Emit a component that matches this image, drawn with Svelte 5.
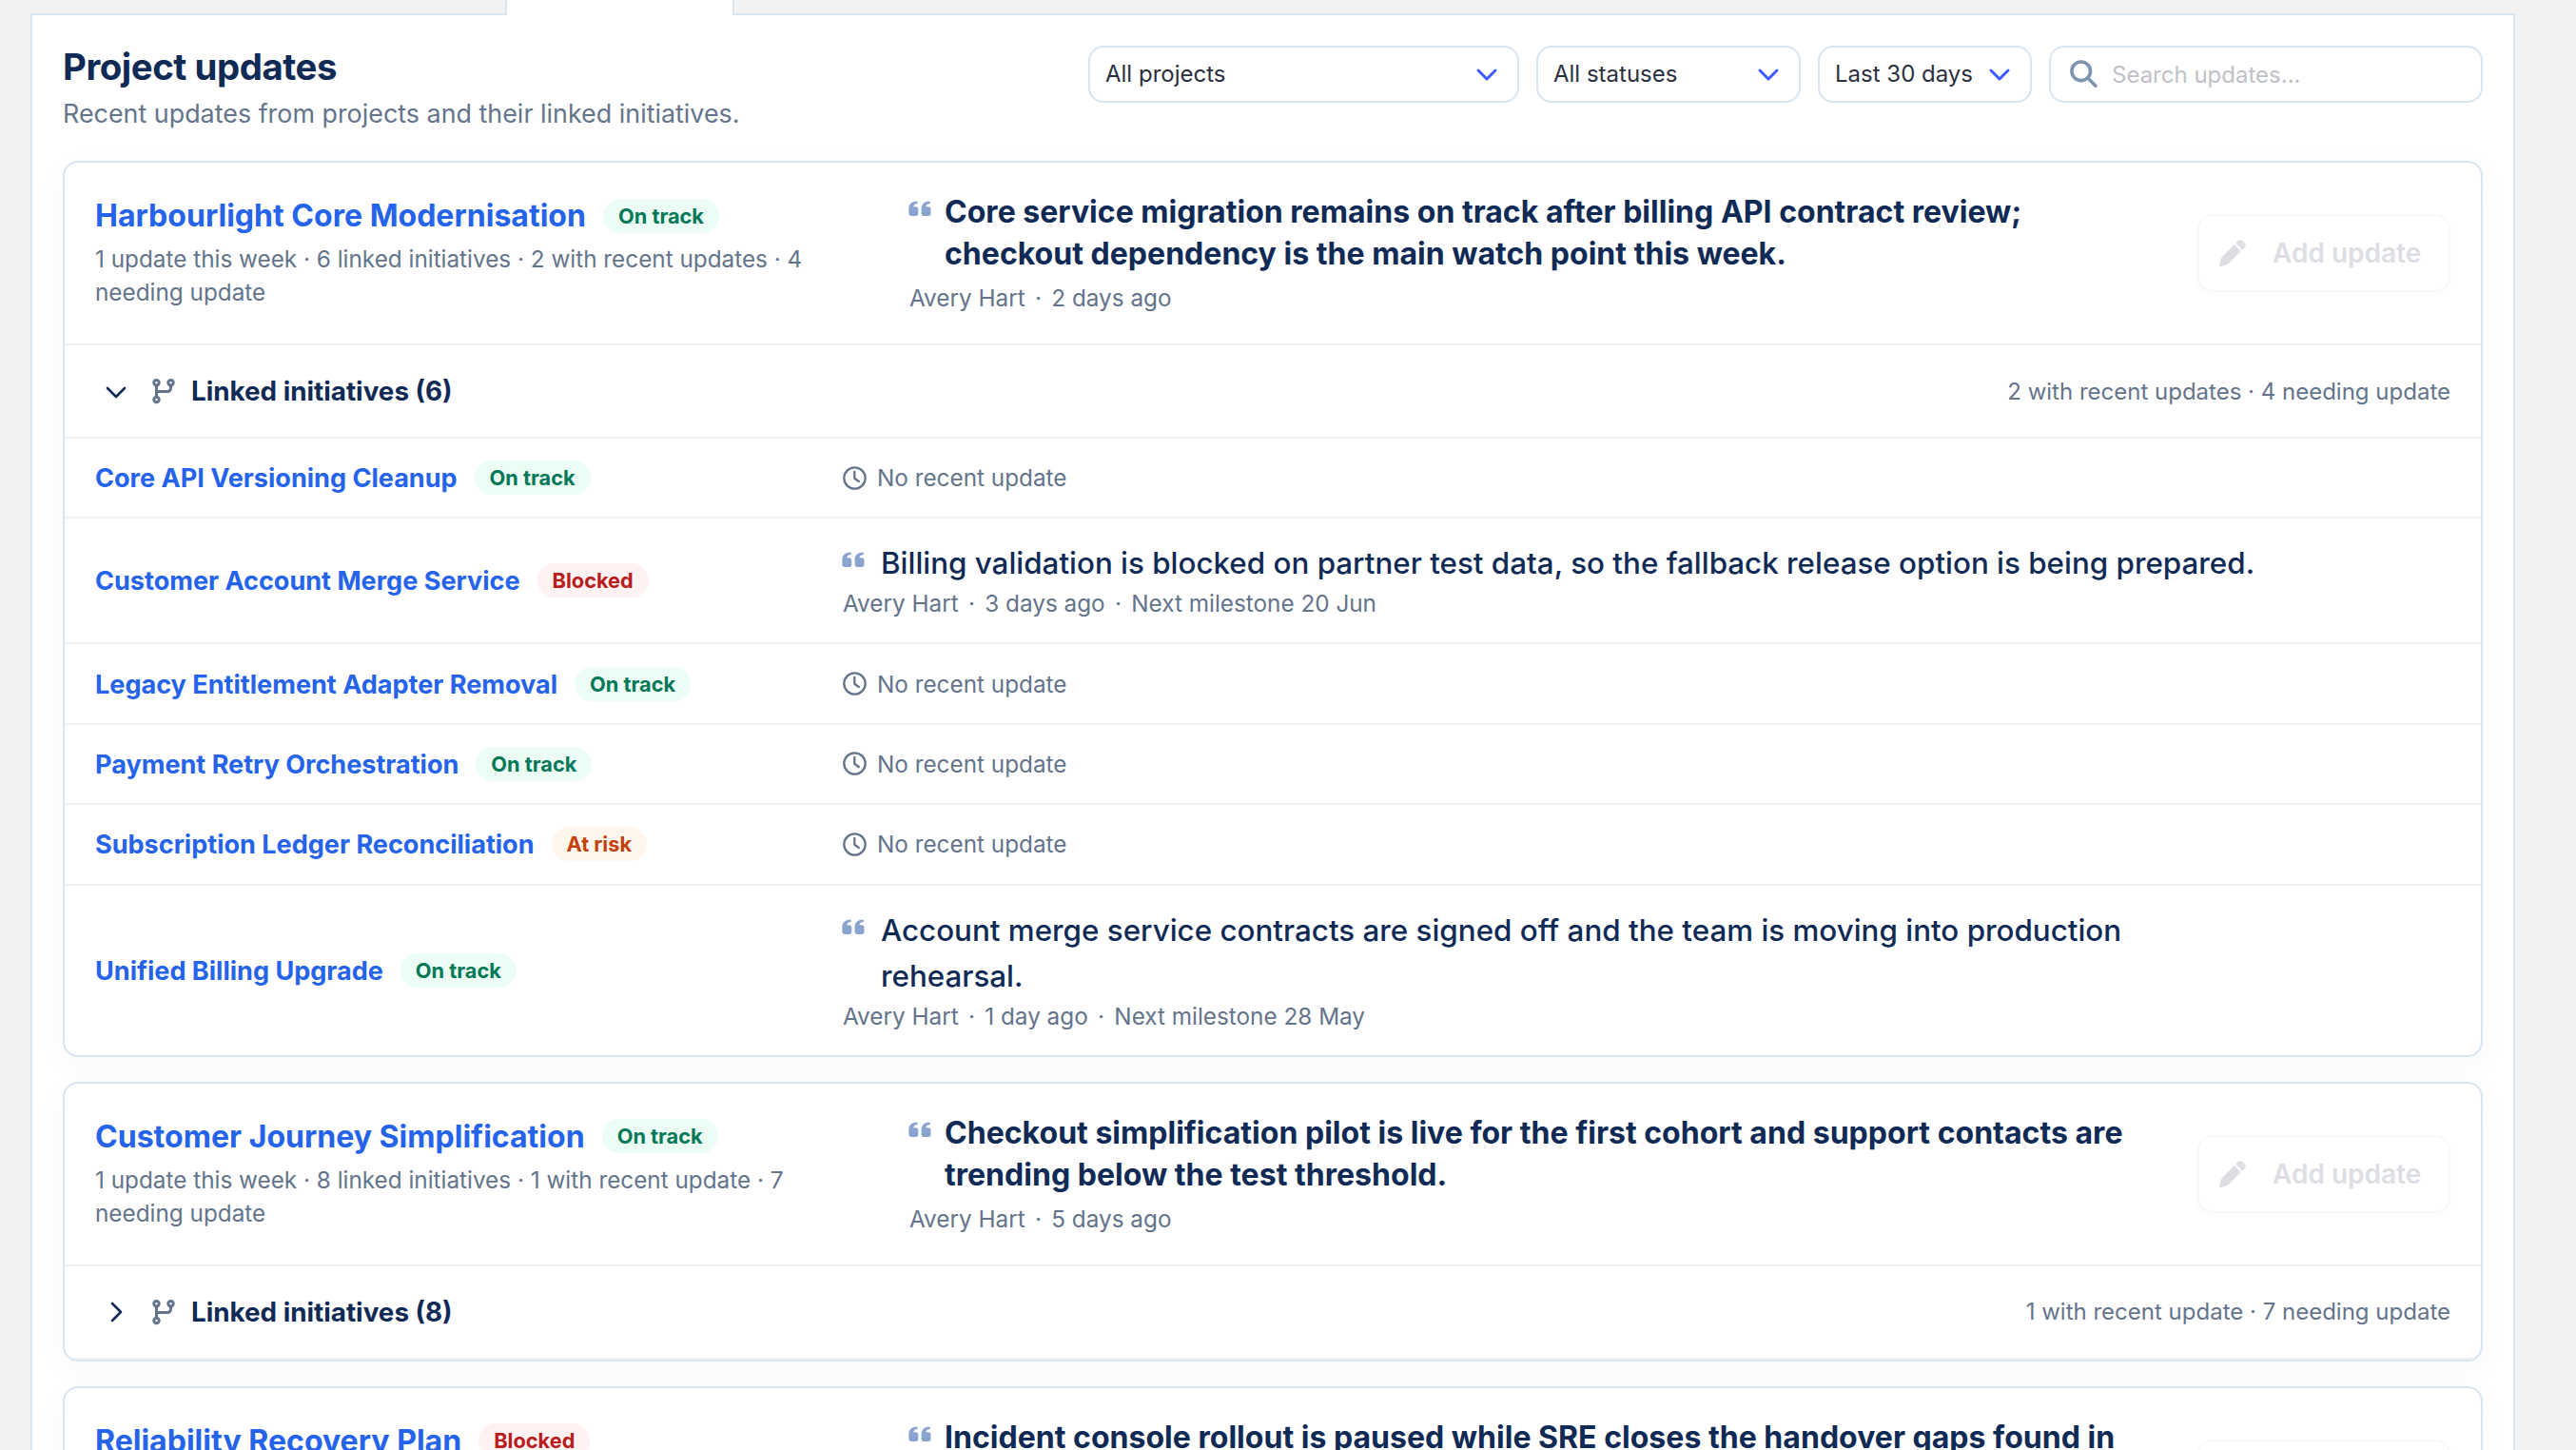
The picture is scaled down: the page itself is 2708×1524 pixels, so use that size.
<script lang="ts">
  type Status = 'On track' | 'Blocked' | 'At risk'

  interface Update {
    text: string
    meta: string[]
  }

  interface Initiative {
    name: string
    status: Status
    update?: Update
  }

  interface Project {
    name: string
    status: Status
    summary: string
    update: Update
    linked: number
    linkedSummary: string
    open: boolean
    initiatives: Initiative[]
  }

  const filters = [
    { id: 'project', label: 'All projects' },
    { id: 'status', label: 'All statuses' },
    { id: 'period', label: 'Last 30 days' },
  ]

  let projects: Project[] = $state([
    {
      name: 'Harbourlight Core Modernisation',
      status: 'On track',
      summary: '1 update this week · 6 linked initiatives · 2 with recent updates · 4 needing update',
      update: {
        text: 'Core service migration remains on track after billing API contract review; checkout dependency is the main watch point this week.',
        meta: ['Avery Hart', '2 days ago'],
      },
      linked: 6,
      linkedSummary: '2 with recent updates · 4 needing update',
      open: true,
      initiatives: [
        { name: 'Core API Versioning Cleanup', status: 'On track' },
        {
          name: 'Customer Account Merge Service',
          status: 'Blocked',
          update: {
            text: 'Billing validation is blocked on partner test data, so the fallback release option is being prepared.',
            meta: ['Avery Hart', '3 days ago', 'Next milestone 20 Jun'],
          },
        },
        { name: 'Legacy Entitlement Adapter Removal', status: 'On track' },
        { name: 'Payment Retry Orchestration', status: 'On track' },
        { name: 'Subscription Ledger Reconciliation', status: 'At risk' },
        {
          name: 'Unified Billing Upgrade',
          status: 'On track',
          update: {
            text: 'Account merge service contracts are signed off and the team is moving into production rehearsal.',
            meta: ['Avery Hart', '1 day ago', 'Next milestone 28 May'],
          },
        },
      ],
    },
    {
      name: 'Customer Journey Simplification',
      status: 'On track',
      summary: '1 update this week · 8 linked initiatives · 1 with recent update · 7 needing update',
      update: {
        text: 'Checkout simplification pilot is live for the first cohort and support contacts are trending below the test threshold.',
        meta: ['Avery Hart', '5 days ago'],
      },
      linked: 8,
      linkedSummary: '1 with recent update · 7 needing update',
      open: false,
      initiatives: [],
    },
    {
      name: 'Reliability Recovery Plan',
      status: 'Blocked',
      summary: '',
      update: {
        text: 'Incident console rollout is paused while SRE closes the handover gaps found in',
        meta: [],
      },
      linked: 0,
      linkedSummary: '',
      open: false,
      initiatives: [],
    },
  ])

  function statusClass(status: Status): string {
    return status.toLowerCase().replace(' ', '-')
  }
</script>

{#snippet quoteIcon()}
  <svg class="quote-icon" viewBox="0 0 24 16.5" aria-hidden="true">
    <path d="M9.6 .4v2.7C6.9 3.3 5.3 4.4 5.2 6.2H7.6C9.3 6.2 10.3 7.2 10.3 8.9V13.2C10.3 14.9 9.3 15.9 7.6 15.9H3.2C1.5 15.9 .4 14.9 .4 13.2V8C.4 3.3 3.6 .4 9.6 .4Z" />
    <path transform="translate(13.2 0)" d="M9.6 .4v2.7C6.9 3.3 5.3 4.4 5.2 6.2H7.6C9.3 6.2 10.3 7.2 10.3 8.9V13.2C10.3 14.9 9.3 15.9 7.6 15.9H3.2C1.5 15.9 .4 14.9 .4 13.2V8C.4 3.3 3.6 .4 9.6 .4Z" />
  </svg>
{/snippet}

{#snippet meta(parts: string[])}
  <p class="meta">
    {#each parts as part, i}
      {#if i > 0}<span>·</span>{/if}
      <span>{part}</span>
    {/each}
  </p>
{/snippet}

<div class="tabs"><div class="tab-active"></div></div>

<main class="panel">
  <header class="page-header">
    <div>
      <h1>Project updates</h1>
      <p class="subtitle">Recent updates from projects and their linked initiatives.</p>
    </div>
    <div class="filters">
      {#each filters as filter}
        <button class="select select-{filter.id}">
          {filter.label}
          <svg viewBox="0 0 24 24" aria-hidden="true"><path d="M3 9l9 9 9-9" /></svg>
        </button>
      {/each}
      <label class="search">
        <svg viewBox="0 0 30 30" aria-hidden="true">
          <circle cx="11.7" cy="11.8" r="9.8" />
          <path d="M19 19.2L27 27.2" />
        </svg>
        <input type="text" placeholder="Search updates..." />
      </label>
    </div>
  </header>

  {#each projects as project}
    <article class="card">
      <div class="project">
        <div class="project-info">
          <div class="name-row">
            <h2>{project.name}</h2>
            <span class="badge {statusClass(project.status)}">{project.status}</span>
          </div>
          <p class="summary">{project.summary}</p>
        </div>
        <div class="project-update">
          <div class="quote">
            {@render quoteIcon()}
            <p>{project.update.text}</p>
          </div>
          {@render meta(project.update.meta)}
        </div>
        <button class="add" disabled>
          <svg viewBox="0 0 28 28" aria-hidden="true">
            <path d="M15.8 5L22.8 12L10 24.8Q8.8 26 7 26.5L1.5 28Q0 28.2 .2 26.8L1.5 21Q1.9 19.2 3.2 17.8Z" />
            <path d="M17.2 3.6L19.6 1.2Q22 -.8 24.4 1.3L26.7 3.6Q28.8 6 26.8 8.2L24.3 10.6Z" />
          </svg>
          Add update
        </button>
      </div>

      <button class="linked" onclick={() => (project.open = !project.open)}>
        <svg class="chevron" viewBox="0 0 24 24" aria-hidden="true">
          <path d={project.open ? 'M3 9l9 9 9-9' : 'M8 3l9 9-9 9'} />
        </svg>
        <svg class="branch" viewBox="0 0 24 28" aria-hidden="true">
          <circle cx="4.5" cy="5.2" r="2.7" />
          <circle cx="19.5" cy="5.2" r="2.7" />
          <circle cx="4.5" cy="23" r="2.7" />
          <path d="M4.5 8v12M19.5 8v2.4q0 4-4 4h-11" />
        </svg>
        {#if project.linked}
          <strong>Linked initiatives ({project.linked})</strong>
          <span>{project.linkedSummary}</span>
        {/if}
      </button>

      {#if project.open}
        <div class="initiatives">
          {#each project.initiatives as item}
            <div class="initiative" class:with-update={item.update}>
              <div class="name-row">
                <h3>{item.name}</h3>
                <span class="badge {statusClass(item.status)}">{item.status}</span>
              </div>
              {#if item.update}
                <div class="initiative-update">
                  <div class="quote">
                    {@render quoteIcon()}
                    <p>{item.update.text}</p>
                  </div>
                  {@render meta(item.update.meta)}
                </div>
              {:else}
                <p class="empty">
                  <svg viewBox="0.5 0.5 25 25" aria-hidden="true">
                    <circle cx="13" cy="13" r="11.2" />
                    <path d="M12.8 6.5v6.8l4.5 3.2" />
                  </svg>
                  No recent update
                </p>
              {/if}
            </div>
          {/each}
        </div>
      {/if}
    </article>
  {/each}
</main>

<style>
  :global(body) {
    background: #f2f2f2;
    overflow: hidden;
    height: 1524px;
  }

  :global(#app) {
    font-family: Inter, 'Liberation Sans', sans-serif;
    color: #102a56;
    height: 1524px;
    overflow: hidden;
  }

  h1,
  h2,
  h3,
  p {
    margin: 0;
  }

  button,
  input {
    font-family: inherit;
    color: inherit;
    background: none;
    border: 0;
    padding: 0;
  }

  .tabs {
    position: relative;
    z-index: 1;
    height: 16px;
    padding-left: 531px;
  }

  .tab-active {
    box-sizing: border-box;
    width: 241px;
    height: 16px;
    background: #fff;
    border: solid #d9e4f1;
    border-width: 0 2px;
  }

  .panel {
    box-sizing: border-box;
    width: 2612px;
    min-height: 1600px;
    margin: -2px 0 0 32px;
    padding: 32px 32px 0;
    background: #fff;
    border: 2px solid #d9e4f1;
  }

  .page-header {
    display: flex;
    justify-content: space-between;
    height: 121px;
  }

  h1 {
    font-size: 38.4px;
    font-weight: 700;
    letter-spacing: -0.45px;
    line-height: 44px;
  }

  .subtitle {
    margin-top: 7px;
    color: #64748b;
    font-size: 26.88px;
    line-height: 40px;
  }

  .filters {
    display: flex;
    gap: 18px;
  }

  .select,
  .search {
    box-sizing: border-box;
    display: flex;
    align-items: center;
    height: 60px;
    border: 2px solid #d9e4f1;
    border-radius: 16px;
    background: #fff;
    font-size: 24px;
  }

  .select {
    justify-content: space-between;
    padding: 0 20px 2px 16px;
    color: #2b2f3f;
  }

  .select-project {
    width: 453px;
  }

  .select-status {
    width: 278px;
  }

  .select-period {
    width: 225px;
  }

  .select svg {
    width: 24px;
    height: 24px;
    fill: none;
    stroke: #3d5afe;
    stroke-width: 3;
    stroke-linecap: round;
    stroke-linejoin: round;
  }

  .search {
    width: 456px;
    padding: 0 20px;
    gap: 14px;
  }

  .search svg {
    width: 30px;
    height: 30px;
    fill: none;
    stroke: #8094b0;
    stroke-width: 3.6;
    stroke-linecap: round;
  }

  .search input {
    flex: 1;
    min-width: 0;
    font-size: 24px;
    outline: none;
  }

  .search input::placeholder {
    color: #c0c2c7;
  }

  .card {
    margin-bottom: 26px;
    border: 2px solid #d9e4f1;
    border-radius: 16px;
    background: #fff;
    box-shadow: 0 8px 36px rgba(15, 23, 42, 0.03);
    overflow: hidden;
  }

  .project {
    box-sizing: border-box;
    display: grid;
    grid-template-columns: 790px 1fr 266px;
    column-gap: 66px;
    height: 192px;
    padding: 32px 32px 0;
    border-bottom: 2px solid #edf1f6;
  }

  .name-row {
    display: flex;
    align-items: center;
    gap: 18px;
  }

  h2 {
    color: #2563eb;
    font-size: 32.05px;
    font-weight: 700;
    line-height: 46px;
    padding-top: 1px;
  }

  .badge {
    padding: 0 16px;
    border-radius: 18px;
    font-size: 21.75px;
    font-weight: 700;
    line-height: 36px;
    white-space: nowrap;
  }

  .on-track {
    color: #047857;
    background: #ecfdf5;
  }

  .blocked {
    color: #b91c1c;
    background: #fef2f2;
  }

  .at-risk {
    color: #c2410c;
    background: #fff7ed;
  }

  .summary,
  .meta,
  .empty,
  .linked span {
    color: #64748b;
    font-size: 24.3px;
    font-weight: 400;
  }

  .summary {
    margin-top: 5px;
    line-height: 35px;
    width: 765px;
  }

  .quote {
    display: flex;
  }

  .quote-icon {
    flex: none;
    width: 24px;
    height: 16.5px;
    fill: #8aa4cf;
  }

  .project-update {
    margin-top: -2px;
  }

  .project-update .quote-icon {
    margin: 10px 14px 0 -1px;
  }

  .project-update .quote p {
    font-size: 32.05px;
    font-weight: 700;
    line-height: 44px;
  }

  .meta {
    display: flex;
    gap: 10.3px;
    line-height: 36px;
  }

  .project-update .meta {
    margin-top: 6px;
  }

  .add {
    box-sizing: border-box;
    display: flex;
    align-items: center;
    gap: 28px;
    height: 82px;
    margin-top: 22px;
    padding: 0 0 0 21px;
    border: 2px solid #f7f8fa;
    border-radius: 16px;
    color: #dcdee4;
    font-size: 28px;
    font-weight: 600;
    white-space: nowrap;
    box-shadow: 0 2px 6px rgba(15, 23, 42, 0.02);
  }

  .add svg {
    width: 28px;
    height: 28px;
    fill: #dcdee4;
  }

  .linked {
    box-sizing: border-box;
    display: flex;
    align-items: center;
    width: 100%;
    height: 98px;
    padding: 0 32px 0 42px;
    border-bottom: 2px solid #edf1f6;
  }

  .linked svg {
    fill: none;
    stroke-linecap: round;
    stroke-linejoin: round;
  }

  .chevron {
    width: 24px;
    height: 24px;
    stroke: #102a56;
    stroke-width: 2.6;
  }

  .branch {
    width: 24px;
    height: 28px;
    margin: 0 17px 0 26px;
    stroke: #64748b;
    stroke-width: 3;
  }

  .linked strong {
    font-size: 27.8px;
    font-weight: 700;
  }

  .linked span {
    margin-left: auto;
    font-size: 24px;
  }

  .initiative {
    box-sizing: border-box;
    display: grid;
    grid-template-columns: 786px 1fr;
    align-items: center;
    height: 84.4px;
    padding: 0 32px;
    border-bottom: 2px solid #edf1f6;
  }

  .initiative.with-update {
    height: 132px;
  }

  .initiative.with-update:last-child {
    height: 178px;
    border-bottom: 0;
  }

  h3 {
    color: #2563eb;
    font-size: 27.06px;
    font-weight: 700;
    padding-top: 1px;
  }

  .initiative-update .quote-icon {
    margin: 12px 17px 0 -1px;
  }

  .initiative-update .quote p {
    max-width: 1452px;
    font-size: 31.35px;
    font-weight: 500;
    line-height: 48px;
  }

  .empty {
    display: flex;
    align-items: center;
    gap: 11px;
  }

  .empty svg {
    width: 25px;
    height: 25px;
    fill: none;
    stroke: #64748b;
    stroke-width: 2.3;
    stroke-linecap: round;
    stroke-linejoin: round;
  }
</style>
